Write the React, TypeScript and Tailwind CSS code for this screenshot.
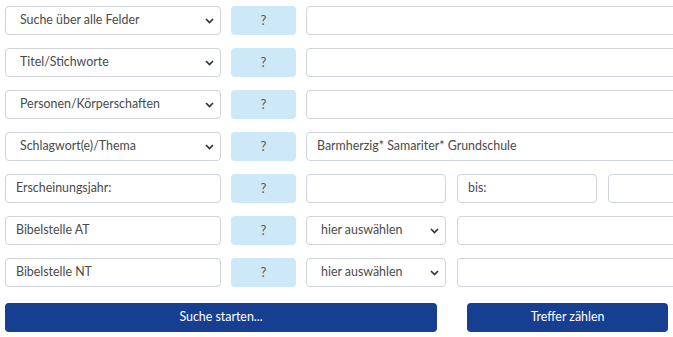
import React from "react";

const font = { fontFamily: "Lato, 'Open Sans', sans-serif" };

function Chevron() {
  return (
    <svg width="9" height="6" viewBox="0 0 9 6" className="shrink-0">
      <path d="M1 1 L4.5 4.5 L8 1" fill="none" stroke="#333" strokeWidth="1.7" />
    </svg>
  );
}

function Select({ label, w }: { label: string; w: string }) {
  return (
    <div className={`${w} h-[29px] shrink-0 flex items-center justify-between pl-[14px] pr-[6px] border border-[#ced4da] rounded-[4px] bg-white text-[12.4px] text-[#4a4a4a]`}>
      <span>{label}</span>
      <Chevron />
    </div>
  );
}

function Field({ text = "", w }: { text?: string; w: string }) {
  return (
    <div className={`${w} h-[29px] shrink-0 flex items-center pl-[10px] border border-[#ced4da] rounded-[4px] bg-white text-[12.4px] text-[#4a4a4a]`}>
      {text}
    </div>
  );
}

function Help() {
  return (
    <div className="w-[65px] h-[29px] shrink-0 flex items-center justify-center rounded-[4px] bg-[#cde8f6] text-[13px] text-[#555]">
      ?
    </div>
  );
}

export default function App() {
  return (
    <div className="w-full h-[337px] overflow-hidden bg-white" style={font}>
      <div className="flex flex-col gap-[13px] pt-[6px] px-[5px] w-[760px]">
        {["Suche über alle Felder", "Titel/Stichworte", "Personen/Körperschaften"].map((l) => (
          <div key={l} className="flex gap-[10px]">
            <Select label={l} w="w-[216px]" />
            <Help />
            <Field w="w-[442px]" />
          </div>
        ))}
        <div className="flex gap-[10px]">
          <Select label="Schlagwort(e)/Thema" w="w-[216px]" />
          <Help />
          <Field w="w-[442px]" text="Barmherzig* Samariter* Grundschule" />
        </div>
        <div className="flex gap-[10px]">
          <Field w="w-[216px]" text="Erscheinungsjahr:" />
          <Help />
          <div className="flex gap-[11px]">
            <Field w="w-[140px]" />
            <Field w="w-[140px]" text="bis:" />
            <Field w="w-[140px]" />
          </div>
        </div>
        {["Bibelstelle AT", "Bibelstelle NT"].map((l) => (
          <div key={l} className="flex gap-[10px]">
            <Field w="w-[216px]" text={l} />
            <Help />
            <div className="flex gap-[11px]">
              <Select label="hier auswählen" w="w-[140px]" />
              <Field w="w-[291px]" />
            </div>
          </div>
        ))}
        <div className="flex gap-[30px] mt-[3px]">
          <button className="w-[432px] h-[29px] rounded-[4px] bg-[#173f91] text-white text-[12.4px]">Suche starten...</button>
          <button className="w-[201px] h-[29px] rounded-[4px] bg-[#173f91] text-white text-[12.4px]">Treffer zählen</button>
        </div>
      </div>
    </div>
  );
}
